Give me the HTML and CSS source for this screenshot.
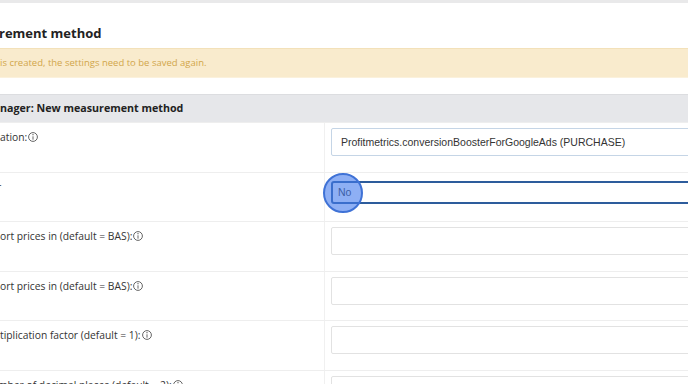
FILE: index.html
```html
<!DOCTYPE html>
<html lang="en">
<head>
<meta charset="utf-8">
<title>New measurement method</title>
<link rel="stylesheet" href="styles.css">
</head>
<body>
<div class="topbar"></div>
<main class="page">
  <h1 class="title"><span class="lead"><span>Add measu</span></span><span class="title-rest">rement method</span></h1>
  <div class="alert"><span class="lead"><span>After the measurement method&nbsp;</span></span><span>is created, the settings need to be saved again.</span></div>
  <section class="panel">
    <div class="panel-heading"><span class="lead"><span>Google Tag Ma</span></span><span>nager: New measurement method</span></div>

    <div class="row">
      <div class="label"><span class="lead"><span>Loc</span></span><span>ation:</span><svg class="info" viewBox="0 0 10 10"><circle cx="5" cy="5" r="4.4"/><path d="M5 4.3V7.7"/><circle class="dot" cx="5" cy="2.7" r="0.65"/></svg></div>
      <div class="field"><div class="input input-active">Profitmetrics.conversionBoosterForGoogleAds (PURCHASE)</div></div>
    </div>

    <div class="row">
      <div class="label"><span class="lead"><span>Send to test serve</span></span><span class="peek">r</span></div>
      <div class="field field-select">
        <div class="select">No</div>
        <div class="click-ring"></div>
      </div>
    </div>

    <div class="row">
      <div class="label"><span class="lead"><span>Imp</span></span><span>ort prices in (default = BAS):</span><svg class="info" viewBox="0 0 10 10"><circle cx="5" cy="5" r="4.4"/><path d="M5 4.3V7.7"/><circle class="dot" cx="5" cy="2.7" r="0.65"/></svg></div>
      <div class="field"><div class="input"></div></div>
    </div>

    <div class="row">
      <div class="label"><span class="lead"><span>Exp</span></span><span>ort prices in (default = BAS):</span><svg class="info" viewBox="0 0 10 10"><circle cx="5" cy="5" r="4.4"/><path d="M5 4.3V7.7"/><circle class="dot" cx="5" cy="2.7" r="0.65"/></svg></div>
      <div class="field"><div class="input"></div></div>
    </div>

    <div class="row">
      <div class="label"><span class="lead"><span>Mul</span></span><span>tiplication factor (default = 1):</span><svg class="info" viewBox="0 0 10 10"><circle cx="5" cy="5" r="4.4"/><path d="M5 4.3V7.7"/><circle class="dot" cx="5" cy="2.7" r="0.65"/></svg></div>
      <div class="field"><div class="input"></div></div>
    </div>

    <div class="row">
      <div class="label"><span class="lead"><span>Nu</span></span><span class="peek-m">mber of decimal places (default = 2):</span><svg class="info" viewBox="0 0 10 10"><circle cx="5" cy="5" r="4.4"/><path d="M5 4.3V7.7"/><circle class="dot" cx="5" cy="2.7" r="0.65"/></svg></div>
      <div class="field"><div class="input"></div></div>
    </div>
  </section>
</main>
</body>
</html>
```

FILE: styles.css
```css
html, body {
  margin: 0;
  padding: 0;
  background: #ffffff;
  overflow: hidden;
}

body {
  width: 688px;
  height: 384px;
  font-family: "Open Sans", "Liberation Sans", sans-serif;
  color: #333333;
}

.topbar {
  height: 3px;
  background: #e9e9ea;
}

.page {
  width: 1100px;
}

/* the leading part of a line that falls left of the visible area */
.lead {
  display: flex;
  width: 0;
  flex-shrink: 0;
  justify-content: flex-end;
  white-space: nowrap;
}

.title {
  display: flex;
  white-space: nowrap;
  margin: 0;
  padding-top: 20px;
  height: 20px;
  line-height: 20px;
  font-size: 13px;
  font-weight: 700;
  color: #222222;
}

.title-rest {
  margin-left: -1px;
}

.alert {
  display: flex;
  white-space: nowrap;
  margin-top: 5px;
  height: 28px;
  line-height: 27px;
  background: #f9ebcd;
  border-top: 1px solid #f3e1b9;
  border-bottom: 1px solid #fbf1dc;
  font-size: 9.5px;
  color: #d1a64b;
}

.panel {
  margin-top: 16px;
}

.panel-heading {
  display: flex;
  white-space: nowrap;
  height: 27px;
  line-height: 26px;
  background: #e6e7ea;
  border-top: 1px solid #dcdde0;
  font-size: 10.7px;
  font-weight: 700;
  color: #222222;
}

.row {
  display: flex;
  box-sizing: border-box;
  height: 49.6px;
  border-top: 1px solid #eeeeee;
}

.label {
  display: flex;
  align-items: flex-start;
  white-space: nowrap;
  box-sizing: border-box;
  width: 325px;
  flex-shrink: 0;
  padding-top: 7px;
  line-height: 14px;
  font-size: 10.3px;
  color: #333333;
  border-right: 1px solid #f0f0f0;
}

.peek {
  margin-left: -3px;
}

.peek-m {
  margin-left: -2px;
}

.info {
  width: 10px;
  height: 10px;
  margin: 2px 0 0 1px;
  fill: none;
  stroke: #555555;
  stroke-width: 0.9;
}

.info .dot {
  fill: #555555;
  stroke: none;
}

.field {
  position: relative;
  flex: 1;
  padding: 5px 0 0 6px;
}

.input {
  box-sizing: border-box;
  width: 600px;
  height: 28px;
  padding-left: 9px;
  border: 1px solid #e2e2e2;
  border-radius: 2px;
  background: #ffffff;
  font-family: "Liberation Sans", Arial, sans-serif;
  font-size: 10.5px;
  line-height: 26px;
  color: #333333;
}

.input-active {
  border-color: #c5d5e6;
}

.field-select {
  padding-top: 8px;
}

.select {
  box-sizing: border-box;
  width: 600px;
  height: 23px;
  padding-left: 5px;
  border: 2px solid #2d5c9c;
  border-radius: 3px;
  background: #ffffff;
  font-family: "Liberation Sans", Arial, sans-serif;
  font-size: 10.5px;
  line-height: 19px;
  color: #333333;
}

.click-ring {
  position: absolute;
  left: -2px;
  top: 0;
  box-sizing: border-box;
  width: 40px;
  height: 40px;
  border-radius: 50%;
  border: 2px solid #3f72d6;
  background: rgba(66, 122, 236, 0.6);
}
```
